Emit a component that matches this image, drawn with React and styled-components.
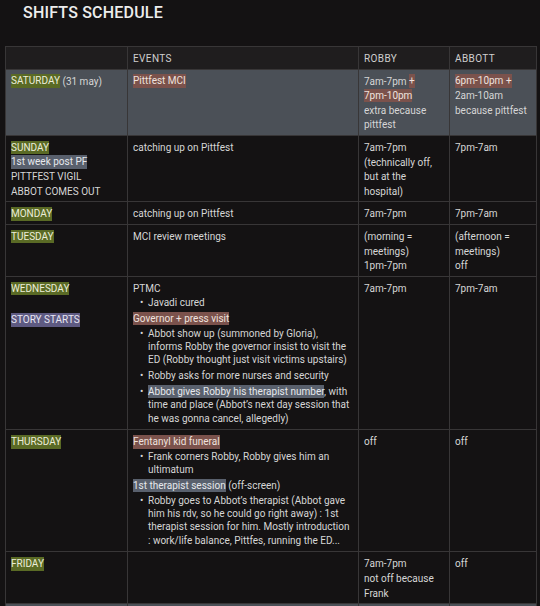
import React from 'react'
import styled, { createGlobalStyle, css } from 'styled-components'

const GlobalStyle = createGlobalStyle`
  html, body {
    margin: 0;
    background: #141213;
  }
  body {
    font-family: Roboto, "Liberation Sans", sans-serif;
    color: #d6d6d6;
  }
`

const tones = {
  green: css`background: #5a6a25; color: #ecedd9;`,
  pink: css`background: #7b524c; color: #efe2df;`,
  slate: css`background: #59606d; color: #e6e8ec;`,
  violet: css`background: #5e5a82; color: #e8e6f2;`,
}

const Page = styled.div`
  padding-top: 3px;
  min-height: 100vh;
`

const Title = styled.h1`
  margin: 0 0 23px 23px;
  font-size: 16px;
  line-height: 20px;
  font-weight: 500;
  color: #ededed;
  letter-spacing: 0.2px;
`

const Table = styled.table`
  margin-left: 5px;
  border-collapse: collapse;
  table-layout: fixed;
  width: 531px;
  font-size: 10px;
`

const HeadCell = styled.th`
  background: #1f1d1e;
  border: 1px solid #383637;
  padding: 5px 6px 2px 5px;
  line-height: 14.6px;
  text-align: left;
  font-weight: 400;
  color: #cfcfcf;
  letter-spacing: 0.4px;
`

const Row = styled.tr`
  background: ${(p) => (p.$shaded ? '#4b5057' : '#141213')};
`

const Cell = styled.td`
  border: 1px solid #383637;
  padding: 5px 6px 2px 5px;
  vertical-align: top;
  line-height: 14.6px;
`

const Para = styled.p`
  margin: ${(p) => (p.$gap ? `${p.$gap}px` : '0')} 0 0;
`

const List = styled.ul`
  margin: 0 0 2.5px;
  padding: 0 0 0 15px;
  list-style: none;
`

const Item = styled.li`
  position: relative;
  line-height: 13.3px;
  & + & {
    margin-top: 2.6px;
  }
  &::before {
    content: '•';
    position: absolute;
    left: -8px;
    top: 0;
  }
`

const Mark = styled.span`
  ${(p) => tones[p.$tone]}
  padding: 1.2px 0;
  box-decoration-break: clone;
  -webkit-box-decoration-break: clone;
`

const Time = styled.span`
  white-space: nowrap;
`

export default function App() {
  return (
    <>
      <GlobalStyle />
      <Page>
        <Title>SHIFTS SCHEDULE</Title>
        <Table>
          <colgroup>
            <col style={{ width: 122 }} />
            <col style={{ width: 231 }} />
            <col style={{ width: 91 }} />
            <col style={{ width: 87 }} />
          </colgroup>
          <thead>
            <tr>
              <HeadCell></HeadCell>
              <HeadCell>EVENTS</HeadCell>
              <HeadCell>ROBBY</HeadCell>
              <HeadCell>ABBOTT</HeadCell>
            </tr>
          </thead>
          <tbody>
            <Row $shaded>
              <Cell>
                <Mark $tone="green">SATURDAY</Mark> (31 may)
              </Cell>
              <Cell>
                <Mark $tone="pink">Pittfest MCI</Mark>
              </Cell>
              <Cell>
                <Time>7am-7pm</Time> <Mark $tone="pink">+ <Time>7pm-10pm</Time></Mark>
                <br />
                extra because pittfest
              </Cell>
              <Cell>
                <Mark $tone="pink"><Time>6pm-10pm</Time> +</Mark> <Time>2am-10am</Time> because
                pittfest
              </Cell>
            </Row>
            <Row>
              <Cell>
                <Mark $tone="green">SUNDAY</Mark>
                <br />
                <Mark $tone="slate">1st week post PF</Mark>
                <br />
                PITTFEST VIGIL
                <br />
                ABBOT COMES OUT
              </Cell>
              <Cell>catching up on Pittfest</Cell>
              <Cell>7am-7pm (technically off, but at the hospital)</Cell>
              <Cell>7pm-7am</Cell>
            </Row>
            <Row>
              <Cell>
                <Mark $tone="green">MONDAY</Mark>
              </Cell>
              <Cell>catching up on Pittfest</Cell>
              <Cell>7am-7pm</Cell>
              <Cell>7pm-7am</Cell>
            </Row>
            <Row>
              <Cell>
                <Mark $tone="green">TUESDAY</Mark>
              </Cell>
              <Cell>MCI review meetings</Cell>
              <Cell>
                (morning = meetings)
                <br />
                1pm-7pm
              </Cell>
              <Cell>
                (afternoon = meetings)
                <br />
                off
              </Cell>
            </Row>
            <Row>
              <Cell>
                <Para>
                  <Mark $tone="green">WEDNESDAY</Mark>
                </Para>
                <Para $gap={17.3}>
                  <Mark $tone="violet">STORY STARTS</Mark>
                </Para>
              </Cell>
              <Cell>
                <Para>PTMC</Para>
                <List>
                  <Item>Javadi cured</Item>
                </List>
                <Para>
                  <Mark $tone="pink">Governor + press visit</Mark>
                </Para>
                <List>
                  <Item>
                    Abbot show up (summoned by Gloria), informs Robby the governor insist to visit the
                    ED (Robby thought just visit victims upstairs)
                  </Item>
                  <Item>Robby asks for more nurses and security</Item>
                  <Item>
                    <Mark $tone="slate">Abbot gives Robby his therapist number</Mark>, with time and
                    place (Abbot’s next day session that he was gonna cancel, allegedly)
                  </Item>
                </List>
              </Cell>
              <Cell>7am-7pm</Cell>
              <Cell>7pm-7am</Cell>
            </Row>
            <Row>
              <Cell>
                <Mark $tone="green">THURSDAY</Mark>
              </Cell>
              <Cell>
                <Para>
                  <Mark $tone="pink">Fentanyl kid funeral</Mark>
                </Para>
                <List>
                  <Item>Frank corners Robby, Robby gives him an ultimatum</Item>
                </List>
                <Para>
                  <Mark $tone="slate">1st therapist session</Mark> (off-screen)
                </Para>
                <List>
                  <Item>
                    Robby goes to Abbot’s therapist (Abbot gave him his rdv, so he could go right
                    away) : 1st therapist session for him. Mostly introduction : work/life balance,
                    Pittfes, running the ED...
                  </Item>
                </List>
              </Cell>
              <Cell>off</Cell>
              <Cell>off</Cell>
            </Row>
            <Row>
              <Cell>
                <Mark $tone="green">FRIDAY</Mark>
              </Cell>
              <Cell></Cell>
              <Cell>
                7am-7pm
                <br />
                not off because Frank
              </Cell>
              <Cell>off</Cell>
            </Row>
            <Row $shaded>
              <Cell>&nbsp;</Cell>
              <Cell></Cell>
              <Cell></Cell>
              <Cell></Cell>
            </Row>
          </tbody>
        </Table>
      </Page>
    </>
  )
}
